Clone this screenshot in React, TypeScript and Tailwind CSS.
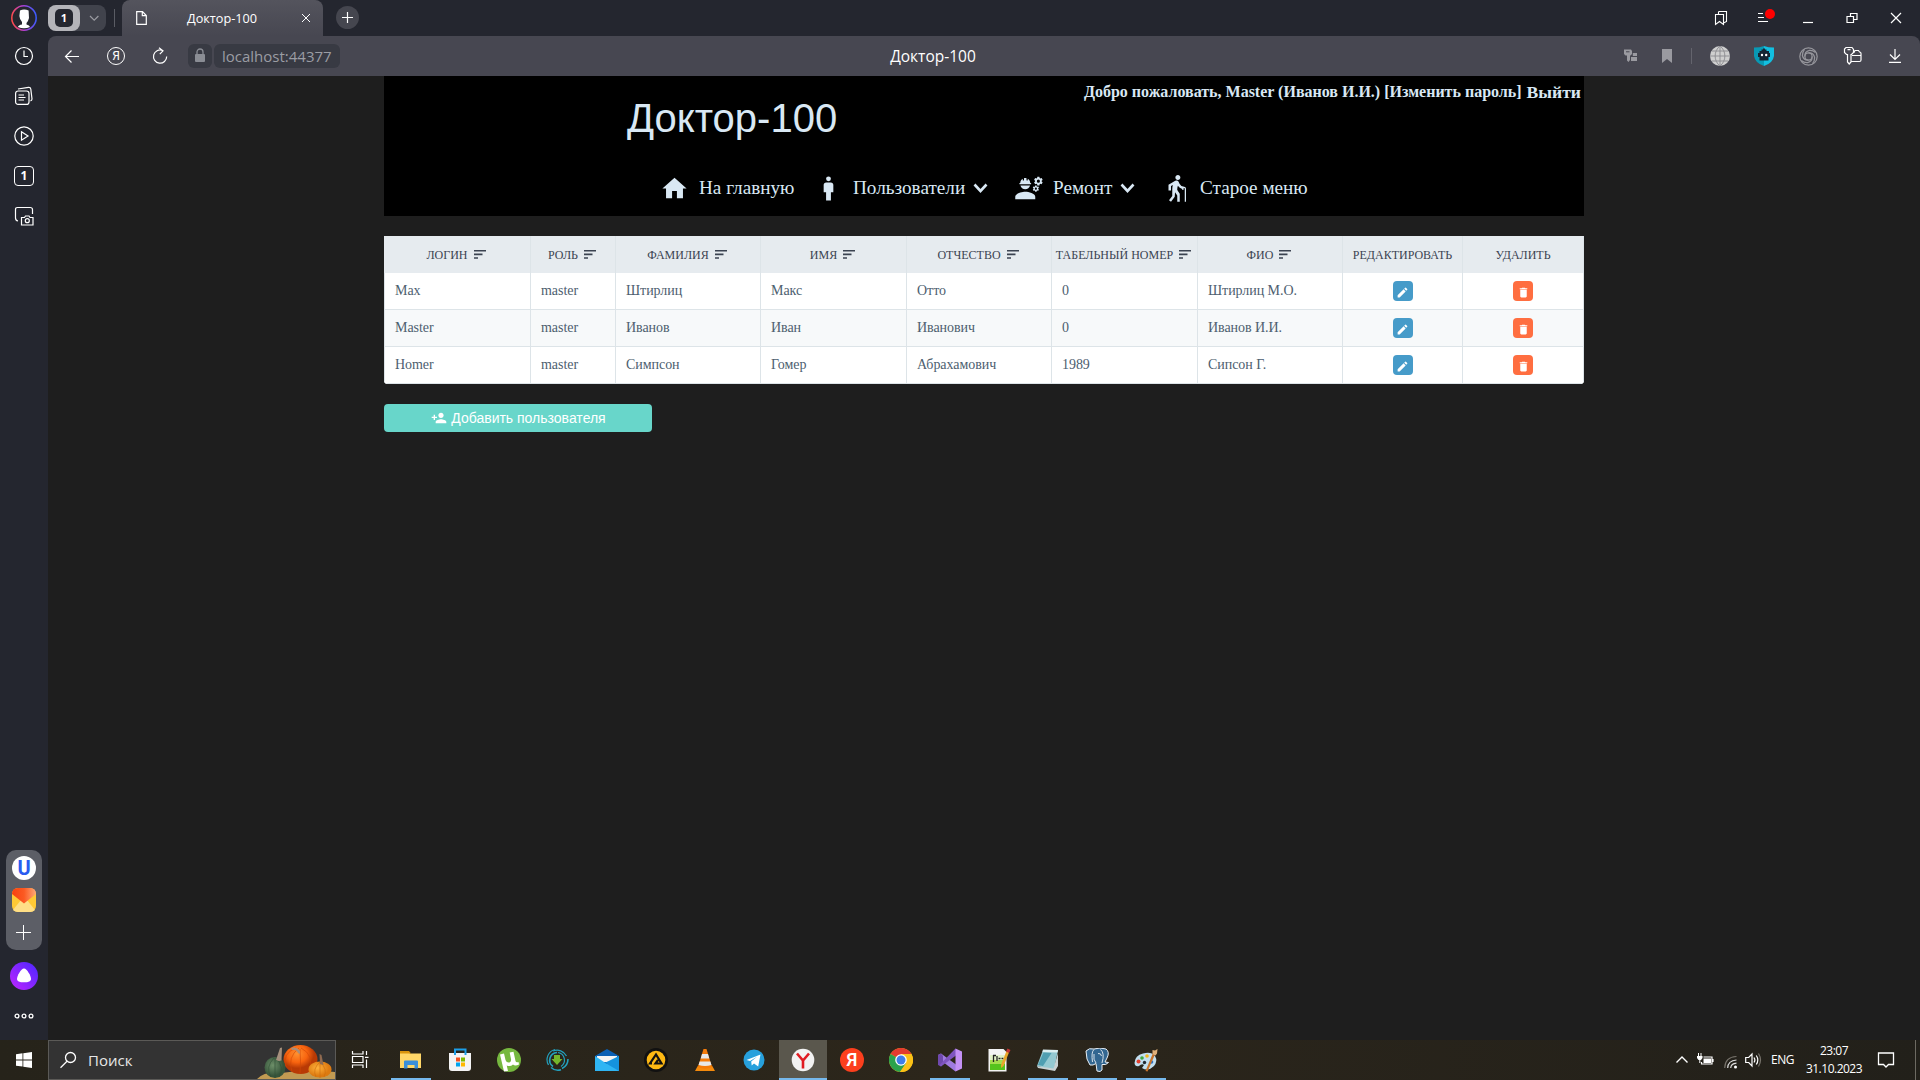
import React from "react";
import { MdHome, MdMan, MdEngineering, MdElderly, MdEdit, MdDelete, MdPersonAdd } from "react-icons/md";

const serif = "font-['Liberation_Serif',serif]";
const ui = "font-['Open_Sans',sans-serif]";

type Kids = { children: React.ReactNode };

function Line({ size = 24, w = 1.2, className = "", children }: Kids & { size?: number; w?: number; className?: string }) {
  return (
    <svg width={size} height={size} viewBox={`0 0 ${size} ${size}`} fill="none" stroke="currentColor" strokeWidth={w} className={`shrink-0 ${className}`}>
      {children}
    </svg>
  );
}

function TabStrip() {
  return (
    <div className="flex h-9 items-start bg-[#24262f]">
      <div className="flex h-9 w-12 items-center justify-center">
        <svg width="26" height="26" viewBox="0 0 26 26">
          <defs>
            <linearGradient id="ring" x1="0" x2="1" y1="0.5" y2="0.4">
              <stop offset="0" stopColor="#ff4b4b" />
              <stop offset="0.45" stopColor="#b43fd0" />
              <stop offset="1" stopColor="#3a5cff" />
            </linearGradient>
          </defs>
          <circle cx="13" cy="13" r="12.2" fill="#24262f" stroke="url(#ring)" strokeWidth="1.5" />
          <path d="M9 5.5Q13 3.6 17.6 5.5L18 13Q17 17 15.5 18V19.5Q18.5 20.3 19 22Q13 24.5 7 22Q7.5 20 11 19.5V17Q8.5 14 8.4 11Z" fill="#fff" />
        </svg>
      </div>
      <div className="mt-[5px] flex h-[26px] w-[58px] items-center rounded-lg bg-[#41434c]">
        <div className="flex h-[26px] w-8 items-center justify-center rounded-lg bg-[#b4b4b9]">
          <div className="flex h-[18px] w-[18px] items-center justify-center rounded-[5px] bg-[#24262f] font-['Open_Sans',sans-serif] text-[11px] font-bold text-white">1</div>
        </div>
        <Line size={26} className="text-[#9a9ba1]">
          <path d="M10 11l4.2 4.2L18.4 11" />
        </Line>
      </div>
      <div className="mt-[9px] ml-2 h-[18px] w-px bg-[#5a5c64]" />
      <div className="ml-[7px] flex h-9 w-[201px] items-center rounded-t-lg bg-linear-to-b from-[#54545d] to-[#474751] text-white">
        <Line size={16} w={1.2} className="ml-[11px]">
          <path d="M3.7 1.7H9.5L13.3 5.5V14.3H3.7ZM9.3 1.7V5.7H13.3" />
        </Line>
        <div className={`ml-[37px] w-[72px] pt-px text-center text-[12.7px] whitespace-nowrap ${ui}`}>Доктор-100</div>
        <Line size={12} className="ml-[42px]" w={1}>
          <path d="M2 2l8 8M10 2l-8 8" />
        </Line>
      </div>
      <div className="mt-1.5 ml-[13px] flex h-[23px] w-[23px] items-center justify-center rounded-full bg-[#45464f] text-white">
        <Line size={13}><path d="M6.500 1v11M1 6.500h11" /></Line>
      </div>
      <div className="flex-1" />
      <div className="flex h-9 items-center text-white">
        <Line size={16} className="mr-7" w={1.100}>
          <path d="M2.500 4.500H10.500V14.500L6.500 11.500L2.500 14.500ZM5.500 4.500V2.300Q5.500 1.500 6.300 1.500H13.500V11.500L10.500 13" />
        </Line>
        <svg width="20" height="18" viewBox="0 0 20 18" className="mr-[25px]">
          <path d="M1 4.500h5M1 8.500h6M1 12.500h10" stroke="#fff" strokeWidth="1.100" />
          <circle cx="13" cy="5" r="5" fill="#f00" />
        </svg>
        <Line size={12} className="mr-8"><path d="M1 10.500h10" /></Line>
        <Line size={12} className="mr-8"><path d="M1 4.500h6.500v6H1zM4.500 4.500V1.500h6.500v6H7.500" /></Line>
        <Line size={12} className="mr-[18px]"><path d="M1 1l10 10M11 1L1 11" /></Line>
      </div>
    </div>
  );
}

function Toolbar() {
  return (
    <div className="flex h-10 items-center rounded-t-lg bg-[#474751] text-white">
      <Line size={18} className="ml-[15px]" w={1.200}><path d="M16 9.500H2.500M8.500 3.500l-6 6 6 6" /></Line>
      <div className="ml-[26px] flex h-[18px] w-[18px] items-center justify-center rounded-full border border-white font-['Roboto',sans-serif] text-[12px] leading-none">Я</div>
      <Line size={18} className="ml-[26px]" w={1.200}>
        <path d="M11.500 3.400A6.600 6.600 0 1 0 15.700 9.500M8 .8L12 3.800L8.800 7.200" />
      </Line>
      <div className="ml-[19px] flex h-6 w-6 items-center justify-center rounded-md bg-[#383a43]">
        <svg width="12" height="16" viewBox="0 0 12 16"><rect x="1" y="6" width="10" height="8" rx="1" fill="#8a8d94" /><path d="M3 7V4a3 3 0 0 1 6 0v3" fill="none" stroke="#8a8d94" strokeWidth="1.300" /></svg>
      </div>
      <div className={`ml-[2px] flex h-6 w-[126px] items-center rounded-md bg-[#383a43] pl-2 text-[15px] whitespace-nowrap text-[#9b9da3] ${ui}`}>localhost:44377</div>
      <div className={`ml-[508px] w-[170px] pt-px text-center text-[15.500px] whitespace-nowrap ${ui}`}>Доктор-100</div>
      <div className="flex-1" />
      <svg width="15" height="16" viewBox="0 0 15 16" className="mr-[23px]" fill="#9a9aa0">
        <path d="M1 1.500h7l1 1.500v3L7.500 7.500H7V12l-1.500 2L4 12.500V7.500H2.500L1 6z" />
        <path d="M9.800 5h4.200v3H9.800zM8 9h6v4H8z" />
        <path d="M3 3.800h3.500" stroke="#474751" />
      </svg>
      <svg width="12" height="14" viewBox="0 0 12 14" className="mr-[18px]" fill="#9a9aa0"><path d="M1 0h10v14L6 10 1 14z" /></svg>
      <div className="mr-[18px] h-4 w-px bg-[#64646d]" />
      <svg width="20" height="20" viewBox="0 0 20 20" className="mr-6">
        <circle cx="10" cy="10" r="10" fill="#cfcfcf" />
        <path d="M10 0v20M0 10h20M2 5h16M2 15h16M10 0C3.500 5 3.500 15 10 20M10 0c6.500 5 6.500 15 0 20" fill="none" stroke="#8a8a8e" strokeWidth="0.900" />
      </svg>
      <svg width="20" height="20" viewBox="0 0 20 20" className="mr-[25px]">
        <path d="M0 1.500Q6 1.500 10 0V20Q1 17 0 10z" fill="#0899b4" />
        <path d="M10 0q4 1.500 10 1.500V10q-1 7-10 10z" fill="#12bfe0" />
        <path d="M5.500 5H7.500V3.500H9V2.500h2v1h1.500V5h2.500v2H16v4h-1.500v3.500h-9V11H4V7h1.500z" fill="#152532" />
        <circle cx="8" cy="9" r="1.200" fill="#fff" /><circle cx="12.200" cy="9" r="1.200" fill="#fff" />
      </svg>
      <Line size={19} className="mr-[25px] text-[#97979d]" w={1.200}>
        <circle cx="9.500" cy="9.500" r="8.700" /><circle cx="9.500" cy="9.500" r="3.600" />
        <path d="M5.900 9.500Q5.500 4.500 10.500 3.400Q14 3.200 16.500 5.500M9.500 5.900Q14.500 5.500 15.600 10.500Q15.800 14 13.500 16.700M13.100 9.500Q13.500 14.500 8.500 15.600Q5 15.800 2.300 13.500M9.500 13.100Q4.500 13.500 3.400 8.500Q3.200 5 5.500 2.300" />
      </Line>
      <Line size={20} className="mr-[25px]" w={1.200}>
        <path d="M3 1.500H9L10.500 3.500V6.500L8.500 8.500H8V16L6.200 18 4.500 16V8.500H3.500L1.500 6.500V3ZM4.500 3.700h3M10.500 6.500H11L12 4.500H15.500L16.500 6Q18 6 18 7.500V14Q18 15.500 16.500 15.500H8.500M9 9.500H18" />
      </Line>
      <Line size={14} className="mr-[18px]" w={1.200}><path d="M7 0v10M2 5.500l5 5 5-5M1 13.400h12" /></Line>
    </div>
  );
}

function SideBar() {
  return (
    <aside className="flex w-12 shrink-0 flex-col items-center bg-[#24262f] text-white">
      <Line size={20} className="mt-[10px]"><circle cx="10" cy="10" r="8.500" /><path d="M10 4.500V10.500H14" /></Line>
      <Line size={20} className="mt-5">
        <rect x="1.600" y="5" width="13.400" height="13.400" rx="2.500" /><path d="M4.500 9h5.500M4.500 11.500h7M4.500 14h5.500M4 3L14.500 1.400Q16.500 1.200 16.800 3L18 13Q18 14.500 16.500 14.800" />
      </Line>
      <Line size={20} className="mt-5"><circle cx="10" cy="10" r="9.200" /><path d="M7.500 5.800L14 10l-6.500 4.200z" /></Line>
      <div className="mt-5 flex h-5 w-5 items-center justify-center rounded border border-white font-['Open_Sans',sans-serif] text-[12px] font-bold leading-none">1</div>
      <Line size={20} className="mt-5">
        <path d="M4 15Q1.500 14.500 1.500 12V3.500Q1.500 1.500 3.500 1.500H16Q18.500 1.500 18.500 3.500V8M7.500 11.500H10.500L11.500 10H15L16 11.500H19V19H7.500Z" /><circle cx="13.300" cy="14.700" r="2" />
      </Line>
      <div className="flex-1" />
      <div className="flex h-[100px] w-9 flex-col items-center rounded-[10px] bg-[#5c5e66] pt-1.5">
        <div className="flex h-6 w-6 items-center justify-center rounded-full bg-white font-['Roboto',sans-serif] text-[20px] leading-none font-bold text-[#2a5cf0]">U</div>
        <svg width="24" height="24" viewBox="0 0 24 24" className="mt-2">
          <defs><linearGradient id="flap" x1="0" x2="1"><stop stopColor="#f9400f" /><stop offset="0.500" stopColor="#fb5a22" /><stop offset="1" stopColor="#ffa978" /></linearGradient></defs>
          <rect width="24" height="24" rx="6" fill="#ffc935" />
          <path d="M1 22L9 12H15L23 22Q21 24 18 24H6Q3 24 1 22Z" fill="#ffdf86" />
          <path d="M0 6Q0 0 6 0H18Q24 0 24 6L12 15.500Z" fill="url(#flap)" />
        </svg>
        <Line size={16} w={1} className="mt-[13px]"><path d="M7.500 0v15M0 7.500h15" /></Line>
      </div>
      <svg width="28" height="28" viewBox="0 0 28 28" className="mt-3 shrink-0">
        <defs><linearGradient id="alice" x1="0" x2="1" y1="1" y2="0"><stop stopColor="#c026ff" /><stop offset="1" stopColor="#4a26ff" /></linearGradient></defs>
        <circle cx="14" cy="14" r="14" fill="url(#alice)" />
        <path d="M14 6.500C17 6.500 21 14 21 17c0 2.500-3 3.300-7 3.300S7 19.500 7 17c0-3 4-10.500 7-10.500z" fill="#fff" />
      </svg>
      <Line size={20} w={1.300} className="mt-4 mb-[14px]"><circle cx="3" cy="10" r="1.900" /><circle cx="10" cy="10" r="1.900" /><circle cx="17" cy="10" r="1.900" /></Line>
    </aside>
  );
}

function Chevron() {
  return <Line size={15} w={2.600} className="mt-px"><path d="M1.500 3.500l6 6.500 6-6.500" /></Line>;
}

function SiteHeader() {
  return (
    <header className={`flex h-[140px] w-[1200px] flex-col bg-black text-[#d9e8f4] ${serif}`}>
      <div className="flex h-[92px] items-start justify-between">
        <h1 className="ml-[243px] pt-[18px] font-['Liberation_Sans',sans-serif] text-[40px] leading-[48px] whitespace-nowrap">Доктор-100</h1>
        <div className="flex items-start pt-1 pr-[3px] leading-6 font-bold whitespace-nowrap">
          <span className="text-[16px]">Добро пожаловать, Master (Иванов И.И.) [Изменить пароль]</span>
          <span className="ml-[5px] text-[17.600px]">Выйти</span>
        </div>
      </div>
      <nav className="flex h-10 items-center pl-[276px] text-[19.200px] whitespace-nowrap">
        <MdHome size={29} className="shrink-0" />
        <span className="ml-[10px] w-[115px]">На главную</span>
        <MdMan size={29} className="shrink-0" />
        <span className="ml-[10px] w-[120px]">Пользователи</span>
        <Chevron />
        <MdEngineering size={30} className="ml-[26px] shrink-0" />
        <span className="ml-[9px] w-[67px]">Ремонт</span>
        <Chevron />
        <MdElderly size={30} className="ml-[26px] shrink-0" />
        <span className="ml-[9px]">Старое меню</span>
      </nav>
    </header>
  );
}

const columns: { label: string; sort: boolean }[] = [
  { label: "Логин", sort: true },
  { label: "Роль", sort: true },
  { label: "Фамилия", sort: true },
  { label: "Имя", sort: true },
  { label: "Отчество", sort: true },
  { label: "Табельный номер", sort: true },
  { label: "ФИО", sort: true },
  { label: "Редактировать", sort: false },
  { label: "Удалить", sort: false },
];

const rows = [
  ["Max", "master", "Штирлиц", "Макс", "Отто", "0", "Штирлиц М.О."],
  ["Master", "master", "Иванов", "Иван", "Иванович", "0", "Иванов И.И."],
  ["Homer", "master", "Симпсон", "Гомер", "Абрахамович", "1989", "Сипсон Г."],
];

const grid = "grid h-[37px] grid-cols-[147px_85px_145px_146px_145px_146px_145px_120px_121px]";

function UsersTable() {
  return (
    <div className={`mt-5 w-[1200px] overflow-hidden rounded-b bg-white text-[#4d5e6f] ${serif}`}>
      <div className={`${grid} bg-[#e6ebef] text-[#3b4351]`}>
        {columns.map((c) => (
          <div key={c.label} className={`flex items-center justify-center border-r border-[#dde4e8] text-[12px] whitespace-nowrap uppercase ${c.sort ? "pr-[2px]" : ""}`}>
            {c.label}
            {c.sort && (
              <svg width="12" height="9" viewBox="0 0 12 9" className="ml-1.5 shrink-0 fill-current"><path d="M0 0h12v1.500H0zM0 3.600h8.500v1.600H0zM0 7.300h4v1.500H0z" /></svg>
            )}
          </div>
        ))}
      </div>
      {rows.map((r, i) => (
        <div key={i} className={`${grid} text-[14px] ${i === 1 ? "bg-[#f7f9fa]" : "bg-white"}`}>
          {r.map((v, j) => (
            <div key={j} className={`flex items-center border-r border-b border-[#dde4e8] pb-px pl-[10px] tracking-[-0.050px] whitespace-nowrap ${j === 0 ? "border-l" : ""}`}>{v}</div>
          ))}
          <div className="flex items-center justify-center border-r border-b border-[#dde4e8]">
            <div className="flex h-5 w-5 items-center justify-center rounded bg-[#469bc9] text-white"><MdEdit size={13} className="mt-[2px] mr-px" /></div>
          </div>
          <div className="flex items-center justify-center border-r border-b border-[#dde4e8]">
            <div className="flex h-5 w-5 items-center justify-center rounded bg-[#ff6e40] text-white"><MdDelete size={13} className="mt-[2px]" /></div>
          </div>
        </div>
      ))}
    </div>
  );
}

function Task({ children, bar = false, active = false }: Kids & { bar?: boolean; active?: boolean }) {
  return (
    <div className={`mr-px flex h-10 w-12 flex-col items-center ${active ? "bg-[#5a574d]" : ""}`}>
      <svg width="24" height="24" viewBox="0 0 24 24" className="mt-2 shrink-0">{children}</svg>
      <div className="flex-1" />
      {bar && <div className={`h-0.5 bg-[#76b9ed] ${active ? "w-12" : "w-10"}`} />}
    </div>
  );
}

function TaskBar() {
  return (
    <footer className={`flex h-10 items-center bg-linear-to-r from-[#26231a] via-[#2c261b] to-[#22201a] text-white ${ui}`}>
      <div className="flex w-12 justify-center">
        <svg width="16" height="16" viewBox="0 0 16 16" fill="#fff"><path d="M0 2.200L6.500 1.300V7.500H0zM7.300 1.200L16 0v7.500H7.300zM0 8.400h6.500v6.200L0 13.700zM7.300 8.400H16V16L7.300 14.800z" /></svg>
      </div>
      <div className="flex h-10 w-72 items-center border border-[#5b5a57] bg-[#333] text-[15px]">
        <Line size={18} className="ml-[10px]" w={1.300}><circle cx="11.500" cy="6.500" r="5" /><path d="M8 10.200L1.500 16.700" /></Line>
        <span className="ml-[11px] text-[#e6e6e6]">Поиск</span>
        <div className="flex-1" />
        <svg width="78" height="38" viewBox="0 0 78 38">
          <defs>
            <radialGradient id="orange" cx="0.4" cy="0.3"><stop stopColor="#ff9130" /><stop offset="0.6" stopColor="#f8640f" /><stop offset="1" stopColor="#b83a05" /></radialGradient>
            <radialGradient id="green" cx="0.4" cy="0.4"><stop stopColor="#6d8f69" /><stop offset="1" stopColor="#36543a" /></radialGradient>
            <radialGradient id="amber" cx="0.4" cy="0.4"><stop stopColor="#ffb13c" /><stop offset="1" stopColor="#dd7a10" /></radialGradient>
          </defs>
          <path d="M0 38Q8 30 24 32Q50 28 78 31V38Z" fill="#c19a52" />
          <ellipse cx="43.500" cy="18.500" rx="17" ry="14.500" fill="url(#orange)" />
          <path d="M42 7Q30 16 35 31M44 7Q58 14 52 31M43 8Q44 20 43 33M39 7Q25 12 29 26" stroke="#cf4806" strokeWidth="1" fill="none" opacity="0.600" />
          <path d="M34 7q5-2 9 3v3l-2-1q-2-4-6-3z" fill="#a98d7a" />
          <ellipse cx="18" cy="26.500" rx="10.500" ry="10.500" fill="url(#green)" />
          <path d="M17 17Q8 26 14 36M19 17Q28 26 22 36M18 17v20" stroke="#314c35" fill="none" opacity="0.600" />
          <path d="M19 19L23 7l2-.5-.5 13q-3 1-5-.5z" fill="#a5907d" />
          <ellipse cx="63" cy="28.500" rx="11.500" ry="8" fill="url(#amber)" />
          <path d="M63 21Q55 28 59 36M63 21Q71 28 67 36M63 21v16" stroke="#cc6c0e" fill="none" opacity="0.600" />
          <path d="M63 23L62.500 13l2 1 2 10z" fill="#8f6a50" />
        </svg>
      </div>
      <div className="flex w-[51px] pl-[15px]">
        <Line size={18} w={1.200}><path d="M1.500 0V3H12V0M1.500 17V14H12V17M1.500 5.500H12V11.500H1.500ZM15.500 0V4M15.500 8.500V17M14 6.300h3.500" /></Line>
      </div>
      <Task bar>
        <path d="M1 3.500H9L11 5.500H22V20H1Z" fill="#ffd768" /><path d="M1 3h9l2 2.500H1z" fill="#d9950d" /><path d="M5 20V13.500Q5 12.500 6 12.500H18q1 0 1 1V20.500H15.500V17h-7v3.500H5z" fill="#3b8fd9" />
      </Task>
      <Task>
        <path d="M1 5h22v15q0 3-3 3H4q-3 0-3-3z" fill="#f4f4f4" /><path d="M7 7V1.500H17.500V7" fill="none" stroke="#1d9fe8" strokeWidth="2" />
        <path d="M8 9.500h4v4H8z" fill="#f25022" /><path d="M13 9.500h4v4h-4z" fill="#7fba00" /><path d="M8 14.500h4v4H8z" fill="#00a4ef" /><path d="M13 14.500h4v4h-4z" fill="#ffb900" />
      </Task>
      <Task>
        <circle cx="12" cy="12" r="12" fill="#76b83f" /><path d="M3 6.500L7 5.500 8.500 12Q9.500 15 12.500 14.500 14.500 14 14 11L12.700 4.500 16.500 3.700 18.500 13Q19 15 21.500 14L22 16.500Q18 18.500 16 16.500 13.500 19 9.700 17.500L11 23 7 23.500Z" fill="#fff" />
      </Task>
      <Task>
        <g fill="none" stroke="#23a0bd"><path d="M9 1.500A10.500 10.500 0 0 0 2.500 17" strokeWidth="1.200" /><path d="M11 4.500A7.700 7.700 0 0 0 7 18.500" strokeWidth="1.600" /><path d="M7 3A10.500 10.500 0 0 1 20.500 8" strokeWidth="1.200" /><path d="M12 4.500A7.700 7.700 0 0 1 15 18.500" strokeWidth="1.200" /><path d="M5 19.500A10.500 10.500 0 0 0 15 21.800M22 11A10.500 10.500 0 0 1 16 20.500" strokeWidth="1.600" /></g>
        <path d="M8 7h6v4h2.500L11 17 5.500 11H8z" fill="#74b52c" />
      </Task>
      <Task>
        <path d="M0 8L12 1l12 7v15H0z" fill="#0a5fb4" /><path d="M2 8h20v6H2z" fill="#f3f3f3" /><path d="M0 8l12 8 12-8v15H0z" fill="#2fb5f3" /><path d="M24 8v15L10 14.700z" fill="#1593de" />
      </Task>
      <Task>
        <circle cx="12" cy="12" r="12" fill="#111" /><circle cx="12" cy="12" r="9.300" fill="#fdb813" /><path d="M8 15.500H6L12 6.500 17.500 15.500H11.500L14 12" fill="none" stroke="#111" strokeWidth="2.200" />
      </Task>
      <Task>
        <path d="M5 17.500h14l3 5.500H2z" fill="#f58a0c" /><path d="M10.500 1h3L19 19Q12 22.500 5 19z" fill="#f57c0a" /><path d="M9 6h6l1.300 4.500H7.700zM6.600 13.500h10.800L18.500 17Q12 19 5.500 17z" fill="#e8e8e8" />
      </Task>
      <Task>
        <circle cx="12" cy="12" r="10.500" fill="#27a0dc" /><path d="M4.500 12L18.500 6.500 16.200 18.500 12 15.400 9.700 17.500 9.200 13.500 15 8.800 8 13z" fill="#fff" />
      </Task>
      <Task bar active>
        <circle cx="12" cy="12" r="11.300" fill="#f2f2f2" /><path d="M6 5.500L12 12.500 18 5.500M12 12V20.500" fill="none" stroke="#e01b22" strokeWidth="2.600" />
      </Task>
      <Task>
        <circle cx="12" cy="12" r="12" fill="#fc3f1d" /><text x="12" y="18.300" fontSize="18" fontFamily="Roboto" fontWeight="600" textAnchor="middle" fill="#fff">Я</text>
      </Task>
      <Task>
        <circle cx="12" cy="12" r="12" fill="#fbc116" /><path d="M12 12L1.600 6A12 12 0 0 1 22.400 6H12z" fill="#e33b2e" /><path d="M12 12L1.600 6A12 12 0 0 0 11 24L17.200 15z" fill="#2ba24c" /><path d="M12 6h10.400A12 12 0 0 1 11 24L17.200 15z" fill="#fbc116" />
        <circle cx="12" cy="12" r="5.800" fill="#fff" /><circle cx="12" cy="12" r="4.500" fill="#3f7ee8" />
      </Task>
      <Task bar>
        <path d="M0 7L3 5.500 20 18 17.500 23.500 3 12.500z" fill="#a07be0" /><path d="M0 7l3-1.500L5 8v8l-2 2.500L0 17z" fill="#6f49ad" /><path d="M3 18.500L1.500 17 17.500.5 20 6z" fill="#7f55c0" /><path d="M17.500.5L24 3.500v17l-6.500 3z" fill="#c491f5" />
      </Task>
      <Task>
        <path d="M1.500 1h15l3 3V23.500h-18z" fill="#f3f3f3" /><path d="M3 7h15v6H3z" fill="#e2f2c8" /><path d="M3 12h15v4H3z" fill="#a4dc4d" /><path d="M3 16h15v6H3z" fill="#55c31c" /><path d="M6.500 7v7M6 7.500h3M10 8v5M11.500 10.500h2M14.500 10.500h2" stroke="#222" strokeWidth="1.300" /><path d="M19.500 3l2.500 1.500L16.500 18l-2.500 2v-3z" fill="#e9a52b" /><path d="M20.500 0.500l3 1.500-1.500 3-3-1.500z" fill="#c43636" />
      </Task>
      <Task bar>
        <path d="M7 2L22 2 18 22 1 18z" fill="#94c9d2" /><path d="M7 1.500L22 2 21.500 4.500 6.500 4z" fill="#dceff2" /><path d="M1 18L17.500 20.500 22 5V18L19 23 2 20z" fill="#c8d2d4" /><path d="M7.500 4.500l8 .5L7 18l-5-1z" fill="#4f9fb2" />
      </Task>
      <Task bar>
        <path d="M1 3Q4-.5 9 1Q15-1 21 1Q25 4 22 10L20 14 23.500 14.500Q21 17.500 17 16.500V22Q15.500 24.500 12 23L11 15.500 8 17 5 17Q1 12 1 3Z" fill="#336791" stroke="#e8eef3" strokeWidth="1" />
        <path d="M9 1.500Q6 4 7.500 14M15.500 1.500Q20 5 17 15M11 15Q8 12 9 6M13 5.500Q16 5 16.500 8" fill="none" stroke="#e8eef3" strokeWidth="0.900" />
      </Task>
      <Task bar>
        <path d="M.5 15Q1 7 9 5.500Q17 3 21 8Q24 13 20 18Q14 24 8 20L10 17Q8 15 5 18Q1 19 .5 15Z" fill="#c2dff0" />
        <circle cx="4.500" cy="13.500" r="2" fill="#e2402f" /><circle cx="8" cy="10" r="1.800" fill="#3fa83f" /><circle cx="13" cy="8" r="1.800" fill="#f1b51c" /><circle cx="10.500" cy="14.500" r="1.700" fill="#222a33" /><circle cx="17.500" cy="14" r="1.800" fill="#2c73c9" />
        <path d="M19 5l2 1.500L13.500 23.500l-2-.500z" fill="#c8742c" /><path d="M18.500 2l2.500.5 2.500-1.500-.5 4.500-1.500 2-3-1.500z" fill="#e0b07a" />
      </Task>
      <div className="flex-1" />
      <Line size={14} w={1.400}><path d="M1.500 9.500L7 4l5.500 5.500" /></Line>
      <svg width="17" height="14" viewBox="0 0 17 14" className="ml-2" fill="none" stroke="#fff"><path d="M6.500 4h8.500v7H4.500V9M16 6v3" strokeWidth="1.200" /><path d="M6.500 5.500h7.500v4.500H6.500z" fill="#fff" stroke="none" /><path d="M1.500 0v3M4 0v3" /><path d="M0 3h5.500v2l-1.500 2h-2.500L0 5z" fill="#fff" stroke="none" /><path d="M2.800 6v4" /></svg>
      <svg width="14" height="14" viewBox="0 0 14 14" className="mt-1 ml-[10px]" fill="none" strokeWidth="1.200"><path d="M.7 13Q1 2 12.500 1.500" stroke="#77736b" /><path d="M3.700 13Q4 5.500 12.500 5M6.700 13Q7 8.700 12.500 8.200" stroke="#ddd" /><circle cx="11.500" cy="12" r="1.500" fill="#fff" /></svg>
      <svg width="17" height="16" viewBox="0 0 17 16" className="ml-[7px]" fill="none" stroke="#fff" strokeWidth="1.200"><path d="M.7 5.500h3L7 2v12L3.700 10.500h-3zM9 5.500q1.800 2.500 0 5M11.300 3.500q3 4.500 0 9" /><path d="M13.500 1.500q4 6.500 0 13" stroke="#77736b" /></svg>
      <span className="ml-[9px] w-[24px] text-[12px] tracking-[-0.500px]">ENG</span>
      <div className="ml-[10px] w-[58px] text-center text-[12px] leading-[18px] tracking-[-0.500px] whitespace-nowrap"><div>23:07</div><div>31.10.2023</div></div>
      <Line size={18} w={1.300} className="mr-5 ml-[14px]"><path d="M1.500 2H16.500V13.500H11.500L9 16 6.500 13.500H1.500Z" /></Line>
      <div className="mr-1 h-10 w-px bg-[#6d6a62]" />
    </footer>
  );
}

export default function App() {
  return (
    <div className="flex h-[1080px] w-[1920px] flex-col overflow-hidden bg-[#24262f]">
      <TabStrip />
      <div className="flex flex-1">
        <SideBar />
        <div className="flex flex-1 flex-col">
          <Toolbar />
          <main className="flex-1 bg-[#1e1e1e] pl-[336px]">
            <SiteHeader />
            <UsersTable />
            <button className="mt-5 flex h-7 w-[268px] items-center justify-center rounded bg-[#68d6ca] pl-px font-['Liberation_Sans',sans-serif] text-[14px] whitespace-nowrap text-white">
              <MdPersonAdd size={16} className="mr-1 shrink-0" />
              Добавить пользователя
            </button>
          </main>
        </div>
      </div>
      <TaskBar />
    </div>
  );
}
